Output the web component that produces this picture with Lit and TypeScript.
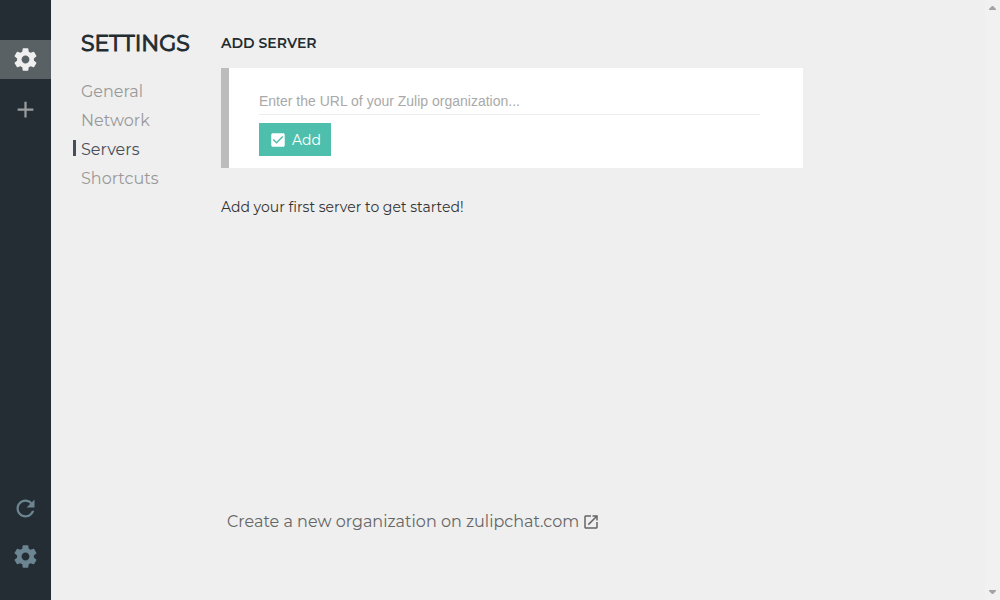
import { LitElement, html, css, svg } from "lit";
import { customElement, state } from "lit/decorators.js";

const icons = {
  settings:
    "M19.43 12.98c.04-.32.07-.64.07-.98s-.03-.66-.07-.98l2.11-1.65c.19-.15.24-.42.12-.64l-2-3.46c-.12-.22-.39-.3-.61-.22l-2.49 1c-.52-.4-1.08-.73-1.69-.98l-.38-2.65C14.46 2.18 14.25 2 14 2h-4c-.25 0-.46.18-.49.42l-.38 2.65c-.61.25-1.17.59-1.69.98l-2.49-1c-.23-.09-.49 0-.61.22l-2 3.46c-.13.22-.07.49.12.64l2.11 1.65c-.04.32-.07.65-.07.98s.03.66.07.98l-2.11 1.65c-.19.15-.24.42-.12.64l2 3.46c.12.22.39.3.61.22l2.49-1c.52.4 1.08.73 1.69.98l.38 2.65c.03.24.24.42.49.42h4c.25 0 .46-.18.49-.42l.38-2.65c.61-.25 1.17-.59 1.69-.98l2.49 1c.23.09.49 0 .61-.22l2-3.46c.12-.22.07-.49-.12-.64l-2.11-1.65zM12 15.5c-1.93 0-3.5-1.57-3.5-3.5s1.57-3.5 3.5-3.5 3.5 1.57 3.5 3.5-1.57 3.5-3.5 3.5z",
  add: "M19 13h-6v6h-2v-6H5v-2h6V5h2v6h6v2z",
  refresh:
    "M17.65 6.35C16.2 4.9 14.21 4 12 4c-4.42 0-7.99 3.58-7.99 8s3.57 8 7.99 8c3.73 0 6.84-2.55 7.73-6h-2.08c-.82 2.33-3.04 4-5.65 4-3.31 0-6-2.69-6-6s2.69-6 6-6c1.66 0 3.14.69 4.22 1.78L13 11h7V4l-2.35 2.35z",
  check:
    "M19 3H5c-1.11 0-2 .9-2 2v14c0 1.1.89 2 2 2h14c1.11 0 2-.9 2-2V5c0-1.1-.89-2-2-2zm-9 14l-5-5 1.41-1.41L10 14.17l7.59-7.59L19 8l-9 9z",
  open: "M19 19H5V5h7V3H5c-1.11 0-2 .9-2 2v14c0 1.1.89 2 2 2h14c1.1 0 2-.9 2-2v-7h-2v7zM14 3v2h3.59l-9.83 9.83 1.41 1.41L19 6.41V10h2V3h-7z",
};

const icon = (name: keyof typeof icons) =>
  html`<svg viewBox="0 0 24 24" aria-hidden="true">${svg`<path d=${icons[name]}></path>`}</svg>`;

@customElement("app-root")
export class AppRoot extends LitElement {
  static styles = css`
    :host {
      display: flex;
      height: 100vh;
      background: #efefef;
      font-family: Montserrat, Inter, sans-serif;
      color: #222c31;
    }
    svg {
      display: block;
      fill: currentColor;
    }
    button {
      border: 0;
      margin: 0;
      padding: 0;
      font: inherit;
      cursor: pointer;
    }
    .sidebar {
      flex: none;
      width: 51px;
      box-sizing: border-box;
      padding: 40px 0 24px;
      display: flex;
      flex-direction: column;
      justify-content: space-between;
      background: #242d33;
    }
    .group {
      display: flex;
      flex-direction: column;
      gap: 9px;
    }
    .tool {
      height: 39px;
      display: grid;
      place-items: center;
      background: none;
      color: #6c8592;
    }
    .tool svg {
      width: 27px;
      height: 27px;
    }
    .tool.active {
      background: #596164;
      color: #efefef;
    }
    .tool.plus {
      margin-top: 2px;
      color: #999d9f;
    }
    .nav {
      flex: none;
      width: 170px;
      box-sizing: border-box;
      padding: 29px 0 0 22px;
    }
    h1 {
      margin: 0 0 18px 8px;
      font-size: 22px;
      line-height: 30px;
      font-weight: 400;
      -webkit-text-stroke: 1px;
    }
    .link {
      display: flex;
      align-items: flex-start;
      gap: 5px;
      height: 29px;
      line-height: 30px;
      font-size: 16px;
      color: #999;
      text-decoration: none;
    }
    .link::before {
      content: "";
      width: 3px;
      height: 16px;
      margin-top: 5px;
    }
    .link.current {
      color: #464e5a;
    }
    .link.current::before {
      background: #464e5e;
    }
    .page {
      flex: 1;
      display: flex;
      flex-direction: column;
      align-items: flex-start;
      padding: 32px 40px 67px 0;
    }
    h2 {
      margin: 0 0 14px;
      font-size: 14px;
      line-height: 22px;
      font-weight: 600;
    }
    .card {
      width: 100%;
      max-width: 582px;
      box-sizing: border-box;
      border-left: 8px solid #bcbcbc;
      background: #fff;
      padding: 20px 43px 12px 30px;
    }
    .url {
      display: block;
      width: 100%;
      height: 27px;
      box-sizing: border-box;
      margin-bottom: 8px;
      padding: 0;
      border: 0;
      border-bottom: 1px solid #ededed;
      outline: 0;
      background: none;
      font: 14px "Liberation Sans", sans-serif;
      color: #222c31;
    }
    .url::placeholder {
      color: #a9a9a9;
    }
    .add {
      display: flex;
      align-items: center;
      gap: 5px;
      height: 33px;
      padding: 0 10px;
      background: #4ebfac;
      color: #fff;
      font-size: 14px;
    }
    .add svg {
      width: 18px;
      height: 18px;
    }
    .hint {
      margin: 28px 0 0;
      font-size: 14px;
      line-height: 22px;
      color: #333;
    }
    .create {
      display: flex;
      align-items: center;
      gap: 3px;
      margin: auto 0 0 6px;
      font-size: 16px;
      line-height: 22px;
      color: #666;
      text-decoration: none;
    }
    .create svg {
      width: 18px;
      height: 18px;
    }
    .scroll {
      flex: none;
      width: 15px;
      box-sizing: border-box;
      padding: 6px 4px;
      display: flex;
      flex-direction: column;
      justify-content: space-between;
      background: #f1f1f1;
      color: #a3a3a3;
    }
    .scroll svg {
      width: 7px;
      height: 4px;
    }
  `;

  @state() private section = "Servers";

  render() {
    return html`
      <aside class="sidebar">
        <div class="group">
          <button class="tool active" aria-label="Settings tab">${icon("settings")}</button>
          <button class="tool plus" aria-label="Add organization">${icon("add")}</button>
        </div>
        <div class="group">
          <button class="tool" aria-label="Reload">${icon("refresh")}</button>
          <button class="tool" aria-label="Settings">${icon("settings")}</button>
        </div>
      </aside>
      <nav class="nav">
        <h1>SETTINGS</h1>
        ${["General", "Network", "Servers", "Shortcuts"].map(
          (name) => html`<a
            class="link ${name === this.section ? "current" : ""}"
            href="#${name}"
            @click=${() => (this.section = name)}
            >${name}</a
          >`
        )}
      </nav>
      <main class="page">
        <h2>ADD SERVER</h2>
        <div class="card">
          <input
            class="url"
            type="text"
            aria-label="Organization URL"
            placeholder="Enter the URL of your Zulip organization..."
          />
          <button class="add">${icon("check")}<span>Add</span></button>
        </div>
        <p class="hint">Add your first server to get started!</p>
        <a class="create" href="#create"
          ><span>Create a new organization on zulipchat.com</span>${icon("open")}</a
        >
      </main>
      <div class="scroll" aria-hidden="true">
        <svg viewBox="0 0 7 4"><path d="M0 4V3L3 0h1l3 3v1z"></path></svg>
        <svg viewBox="0 0 7 4"><path d="M0 0v1l3 3h1l3-3V0z"></path></svg>
      </div>
    `;
  }
}
